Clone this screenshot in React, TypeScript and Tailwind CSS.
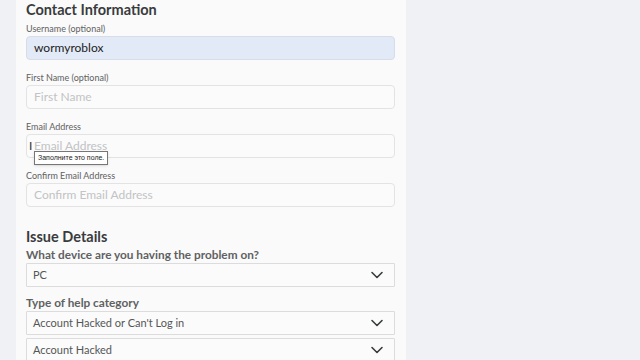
import React from 'react';

const font = { fontFamily: 'Lato, "Noto Sans", sans-serif' };

const Chevron: React.FC = () => (
  <svg width="14" height="14" viewBox="0 0 14 14" fill="none" className="text-[#393b3d]">
    <path d="M2 4.5L7 9.5L12 4.5" stroke="currentColor" strokeWidth="1.6" strokeLinecap="round" strokeLinejoin="round" />
  </svg>
);

const Field: React.FC<{ label: string; placeholder?: string; value?: string; filled?: boolean; children?: React.ReactNode }> = ({
  label,
  placeholder,
  value,
  filled,
  children,
}) => (
  <div className="flex flex-col">
    <label className="text-[9px] leading-[10px] text-[#606162] mb-[2px]">{label}</label>
    <div
      className={
        'relative h-[24px] rounded-[4px] border flex items-center px-[7px] text-[12px] ' +
        (filled ? 'bg-[#e2eaf7] border-[#d6dde8] text-[#222]' : 'bg-[#fbfbfb] border-[#e3e3e3] text-[#c2c3c5]')
      }
    >
      {value ?? placeholder}
      {children}
    </div>
  </div>
);

const Select: React.FC<{ value: string }> = ({ value }) => (
  <div className="h-[24px] shrink-0 border border-[#dcdcdc] rounded-[1px] bg-[#fbfbfb] flex items-center justify-between pl-[6px] pr-[10px] text-[11px] text-[#555657]">
    <span>{value}</span>
    <Chevron />
  </div>
);

export default function App() {
  return (
    <div className="w-[640px] h-[360px] bg-[#eff1f5] flex overflow-hidden" style={font}>
      <div className="ml-[16px] w-[390px] h-full bg-[#fafafa] pl-[10px] pr-[11px] flex flex-col">
        <h2 className="text-[14.5px] font-bold text-[#393b3d] leading-[18px] mt-[1px] mb-[5px]">Contact Information</h2>
        <div className="flex flex-col gap-[13px]">
          <Field label="Username (optional)" value="wormyroblox" filled />
          <Field label="First Name (optional)" placeholder="First Name" />
          <Field label="Email Address" placeholder="Email Address">
            {/* text cursor + native validation tooltip */}
            <span className="absolute left-[2px] top-[5px] text-[12px] leading-[12px] text-[#333]">I</span>
            <div
              className="absolute left-[7px] top-[16px] z-10 border border-[#767676] bg-white px-[3px] py-[1px] text-[7px] leading-[10px] text-[#222] shadow-sm"
              style={{ fontFamily: '"Liberation Sans", sans-serif' }}
            >
              Заполните это поле.
            </div>
          </Field>
          <Field label="Confirm Email Address" placeholder="Confirm Email Address" />
        </div>

        <h3 className="text-[14.5px] font-bold text-[#393b3d] leading-[16px] mt-[22px]">Issue Details</h3>
        <p className="text-[11.8px] font-bold text-[#606162] leading-[14px] mt-[3px] mb-[1px]">What device are you having the problem on?</p>
        <Select value="PC" />
        <p className="text-[11.8px] font-bold text-[#606162] leading-[14px] mt-[9px] mb-[1px]">Type of help category</p>
        <div className="flex flex-col gap-[3px]">
          <Select value="Account Hacked or Can't Log in" />
          <Select value="Account Hacked" />
        </div>
      </div>
    </div>
  );
}
